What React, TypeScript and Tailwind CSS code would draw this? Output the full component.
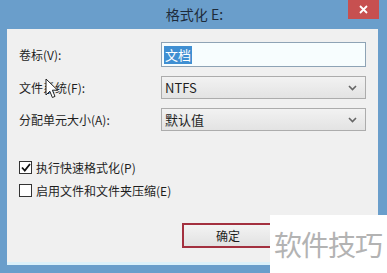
const cjk = "font-['Microsoft_YaHei','Noto_Sans_CJK_SC',sans-serif]";

function Chevron() {
  return (
    <svg width="9" height="6" viewBox="0 0 9 6" className="absolute right-[8px] top-1/2 -translate-y-1/2">
      <path d="M1 1 L4.5 4.5 L8 1" fill="none" stroke="#666" strokeWidth="1.6" />
    </svg>
  );
}

function Select({ value }: { value: string }) {
  return (
    <div className="relative h-[23px] border border-[#acacac] bg-gradient-to-b from-[#f2f2f2] to-[#e3e3e3] flex items-center pl-[3px] text-[13px]">
      {value}
      <Chevron />
    </div>
  );
}

function Checkbox({ checked, label }: { checked?: boolean; label: string }) {
  return (
    <div className="flex items-center gap-[4px] text-[12px] h-[13px]">
      <div className="w-[13px] h-[13px] border border-[#333] bg-white flex items-center justify-center">
        {checked && (
          <svg width="10" height="9" viewBox="0 0 10 9">
            <path d="M1 4.5 L3.8 7.5 L9 1" fill="none" stroke="#111" strokeWidth="1.8" />
          </svg>
        )}
      </div>
      <span>{label}</span>
    </div>
  );
}

export default function App() {
  return (
    <div className={`relative w-[387px] h-[273px] overflow-hidden bg-[#6a9ecb] text-[#1e1e1e] ${cjk}`}>
      <div className="relative h-[29px] flex items-center justify-center text-[14px] text-[#1d2b3a]">
        <span className="pl-[2px]">格式化 E:</span>
        <div className="absolute right-[8px] top-0 w-[31px] h-[19px] bg-[#c75050] flex items-center justify-center">
          <svg width="9" height="9" viewBox="0 0 9 9">
            <path d="M1 1 L8 8 M8 1 L1 8" stroke="#fff" strokeWidth="1.8" />
          </svg>
        </div>
      </div>

      <div className="ml-[7px] mr-[9px] h-[236px] bg-[#f0f0f0] border-b-[3px] border-[#dcf1fa] pt-[13px]">
        <div className="grid grid-cols-[154px_205px] gap-y-[9px] items-center text-[12px]">
          <span className="pl-[12px]">卷标(V):</span>
          <div className="h-[25px] border border-[#8ea3b5] bg-[#f7fdfe] flex items-center pl-[2px]">
            <span className="bg-[#3f8fd2] text-white text-[13px] leading-[18px] px-[1px]">文档</span>
          </div>
          <span className="pl-[12px]">文件系统(F):</span>
          <Select value="NTFS" />
          <span className="pl-[12px]">分配单元大小(A):</span>
          <Select value="默认值" />
        </div>

        <div className="pl-[12px] pt-[30px] flex flex-col gap-[10px]">
          <Checkbox checked label="执行快速格式化(P)" />
          <Checkbox label="启用文件和文件夹压缩(E)" />
        </div>

        <div className="pl-[175px] pt-[26px]">
          <div className="w-[92px] h-[25px] border-2 border-[#a3303f] bg-gradient-to-b from-[#f3f3f3] to-[#e2e2e2] flex items-center justify-center text-[12px]">
            确定
          </div>
        </div>
      </div>

      <svg width="14" height="21" viewBox="0 0 14 21" className="absolute left-[45px] top-[78px]">
        <path d="M1 1 L1 17 L4.8 13.2 L7.4 19.5 L10 18.4 L7.4 12.2 L12.6 12.2 Z" fill="#fff" stroke="#222" strokeWidth="1" />
      </svg>

      <div className="absolute left-[270px] top-[215px] right-0 bottom-0 bg-white flex items-center pl-[4px] text-[28px] text-[#b3b3b3] tracking-[-1px]">
        软件技巧
      </div>
    </div>
  );
}
